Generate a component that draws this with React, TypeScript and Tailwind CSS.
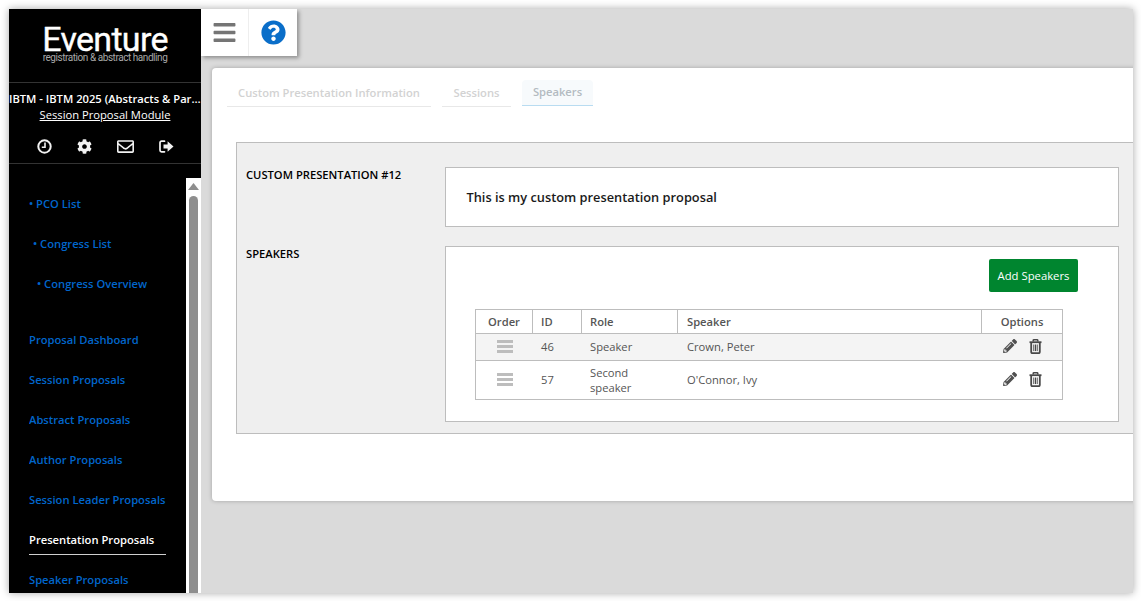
import React from "react";
import { FaBars, FaQuestionCircle, FaCog, FaRegEnvelope, FaPencilAlt } from "react-icons/fa";

const FONT = { fontFamily: '"Open Sans", sans-serif' };

function SignOut() {
  return (
    <svg width="15" height="13" viewBox="0 0 15 13" fill="none">
      <path d="M5.5 1.2H2.6C1.7 1.2 1 1.9 1 2.8v7.4c0 .9.7 1.6 1.6 1.6h2.9" stroke="currentColor" strokeWidth="1.7" strokeLinecap="round" />
      <path d="M4.5 4.4H8.6V1.2L14.5 6.5 8.6 11.8V8.6H4.5z" fill="currentColor" />
    </svg>
  );
}

function Clock() {
  return (
    <svg width="15" height="15" viewBox="0 0 15 15" fill="none">
      <circle cx="7.5" cy="7.5" r="6.2" stroke="currentColor" strokeWidth="2" />
      <path d="M8 3.5V8.3H4.8" stroke="currentColor" strokeWidth="1.6" />
    </svg>
  );
}

function Trash() {
  return (
    <svg width="13" height="15" viewBox="0 0 13 15" fill="none">
      <path d="M4.2 2.6V1.5C4.2 1 4.6.7 5 .7h3c.4 0 .8.3.8.8v1.1" stroke="#484848" strokeWidth="1.5" />
      <path d="M.5 3.2h12" stroke="#484848" strokeWidth="1.8" />
      <path d="M2.2 3.5V13c0 .7.5 1.2 1.1 1.2h6.4c.6 0 1.1-.5 1.1-1.2V3.5" stroke="#484848" strokeWidth="1.8" />
      <path d="M4.8 5.5v6.6M6.5 5.5v6.6M8.2 5.5v6.6" stroke="#484848" strokeWidth="1" />
    </svg>
  );
}

function Item({ label, pl = "pl-0", active = false }: { label: string; pl?: string; active?: boolean }) {
  return (
    <div className={`h-10 flex items-center ${pl}`}>
      <span
        className={
          active
            ? "block w-[137px] text-white font-semibold text-[11.2px] leading-[22px] border-b border-[#cfcfcf] mt-[4px] h-[26px]"
            : "text-[#0066cc] font-semibold text-[11.2px]"
        }
      >
        {label}
      </span>
    </div>
  );
}

function Tab({ label, w, active = false }: { label: string; w: string; active?: boolean }) {
  return (
    <div
      className={
        active
          ? `${w} h-[26px] pt-[3px] text-center text-[11.2px] font-semibold leading-[18px] text-[#b3bbc1] bg-[#f7fafc] border-b border-[#b9dcf1] rounded-t`
          : `${w} h-[27px] pt-[4px] text-center text-[11.2px] font-semibold leading-[18px] text-[#d2d2d2] border-b border-[#e8e8e8]`
      }
    >
      {label}
    </div>
  );
}

function Grip() {
  return (
    <div className="flex flex-col gap-[2px] w-4 mx-auto">
      <div className="h-[3px] bg-[#bdbdbd]" />
      <div className="h-[3px] bg-[#bdbdbd]" />
      <div className="h-[3px] bg-[#bdbdbd]" />
    </div>
  );
}

function Row({ id, role, roleClass = "", speaker, h, bg }: { id: string; role: React.ReactNode; roleClass?: string; speaker: string; h: string; bg: string }) {
  return (
    <div className={`flex items-center ${h} ${bg} border-t border-[#bdbdbd] text-[11.2px] text-[#555]`}>
      <div className="w-[57px] -mt-[1px]"><Grip /></div>
      <div className="w-[49px] pl-[8px]">{id}</div>
      <div className={`w-[96px] pl-[8px] leading-[15px] ${roleClass}`}>{role}</div>
      <div className="w-[304px] pl-[9px]">{speaker}</div>
      <div className="flex-1 flex items-center pl-[21px] gap-[12px] text-[#505050] text-[14px] -mt-[2px]">
        <FaPencilAlt />
        <Trash />
      </div>
    </div>
  );
}

export default function App() {
  return (
    <div className="w-[1141px] h-[601px] bg-white pl-[9px] pt-[9px] overflow-hidden" style={FONT}>
      <div className="w-[1124px] h-[584px] flex bg-[#dadada] overflow-hidden shadow-[0_0_8px_rgba(0,0,0,0.35)]">
        {/* Sidebar */}
        <aside className="w-[192px] shrink-0 h-full bg-black flex flex-col">
          <div className="h-[74px] border-b border-[#333] flex flex-col items-center text-white">
            <div className="text-[34px] leading-[28px] mt-[16px] tracking-[-0.7px] [-webkit-text-stroke:0.35px_white]" style={{ fontFamily: "Roboto, sans-serif" }}>Eventure</div>
            <div className="text-[10px] leading-[10px] text-[#a8a8a8] tracking-[-0.45px]" style={{ fontFamily: "Roboto, sans-serif" }}>registration &amp; abstract handling</div>
          </div>
          <div className="h-[81px] border-b border-[#333] text-white flex flex-col items-center">
            <div className="w-full truncate text-center text-[11.2px] font-semibold leading-[16px] mt-[8px]">IBTM - IBTM 2025 (Abstracts &amp; Parallel Sessions)</div>
            <div className="text-[11.2px] leading-[16px] underline mt-0">Session Proposal Module</div>
            <div className="flex items-center gap-[25px] mt-[15px] text-[15px] text-[#f2f2f2]">
              <Clock />
              <FaCog />
              <FaRegEnvelope className="text-[17px]" />
              <SignOut />
            </div>
          </div>
          <div className="flex-1 min-h-0 flex pt-[14px]">
            <nav className="w-[177px] pl-[20px] overflow-hidden">
              <div className="pt-[6px] h-[419px] overflow-hidden">
                <Item label="• PCO List" />
                <Item label="• Congress List" pl="pl-[4px]" />
                <Item label="• Congress Overview" pl="pl-[8px]" />
                <div className="h-4" />
                <Item label="Proposal Dashboard" />
                <Item label="Session Proposals" />
                <Item label="Abstract Proposals" />
                <Item label="Author Proposals" />
                <Item label="Session Leader Proposals" />
                <Item label="Presentation Proposals" active />
                <Item label="Speaker Proposals" />
              </div>
            </nav>
            <div className="w-[15px] bg-white flex flex-col items-center pt-[5px]">
              <svg width="11" height="7" viewBox="0 0 11 7"><path d="M5.5 0 11 7H0z" fill="#8e8e8e" /></svg>
              <div className="w-[9px] flex-1 mt-[6px] bg-[#8e8e8e] rounded-t-[5px]" />
            </div>
          </div>
        </aside>

        {/* Main */}
        <main className="flex-1 min-w-0 flex flex-col">
          <div className="w-[96px] h-[47px] bg-white flex shadow-[2px_2px_4px_rgba(0,0,0,0.35)]">
            <div className="w-[48px] border-r border-[#eee] flex items-center justify-center text-[#757575] text-[25px]">
              <FaBars />
            </div>
            <div className="flex-1 flex items-center justify-center text-[#0a6ec9] text-[25px]">
              <FaQuestionCircle />
            </div>
          </div>

          <section className="w-[1000px] h-[433px] ml-[11px] mt-[12px] bg-white rounded-[4px] shadow-[0_0_4px_rgba(0,0,0,0.25)] pt-[12px]">
            <div className="flex items-start gap-[11px] pl-[15px]">
              <Tab label="Custom Presentation Information" w="w-[204px]" />
              <Tab label="Sessions" w="w-[69px]" />
              <Tab label="Speakers" w="w-[71px]" active />
            </div>

            <div className="ml-[24px] mt-[35px] w-[960px] h-[292px] bg-[#efefef] border border-[#bdbdbd] pl-[9px] pt-[24px]">
              <div className="flex">
                <div className="w-[199px] text-[11.2px] leading-[15px] font-semibold text-black">CUSTOM PRESENTATION #12</div>
                <div className="w-[674px] h-[60px] bg-white border border-[#bdbdbd] pl-[20.5px] pt-[1px] flex items-center text-[12.8px] font-semibold text-[#1a1a1a]">
                  This is my custom presentation proposal
                </div>
              </div>
              <div className="flex mt-[19px]">
                <div className="w-[199px] text-[11.2px] leading-[15px] font-semibold text-black">SPEAKERS</div>
                <div className="w-[674px] h-[176px] bg-white border border-[#bdbdbd] pt-[12px] pl-[29px]">
                  <div className="w-[588px] flex justify-end">
                    <button className="w-[89px] h-[33px] pt-[1px] mr-[-15px] bg-[#00852f] rounded-[2px] text-white text-[11.3px]">Add Speakers</button>
                  </div>
                  <div className="w-[588px] mt-[17px] border border-[#bdbdbd]">
                    <div className="flex h-[23px] items-center text-[11.2px] font-semibold text-[#555]">
                      <div className="w-[57px] h-full pt-[1px] flex items-center justify-center border-r border-[#bdbdbd]">Order</div>
                      <div className="w-[49px] h-full pt-[1px] flex items-center pl-[8px] border-r border-[#bdbdbd]">ID</div>
                      <div className="w-[96px] h-full pt-[1px] flex items-center pl-[8px] border-r border-[#bdbdbd]">Role</div>
                      <div className="w-[304px] h-full pt-[1px] flex items-center pl-[9px] border-r border-[#bdbdbd]">Speaker</div>
                      <div className="flex-1 h-full pt-[1px] flex items-center justify-center">Options</div>
                    </div>
                    <Row id="46" role="Speaker" roleClass="-mt-[1px]" speaker="Crown, Peter" h="h-[27px]" bg="bg-[#f4f4f4]" />
                    <Row id="57" role={<>Second<br />speaker</>} speaker="O'Connor, Ivy" h="h-[39px]" bg="bg-white" />
                  </div>
                </div>
              </div>
            </div>
          </section>
        </main>
      </div>
    </div>
  );
}
